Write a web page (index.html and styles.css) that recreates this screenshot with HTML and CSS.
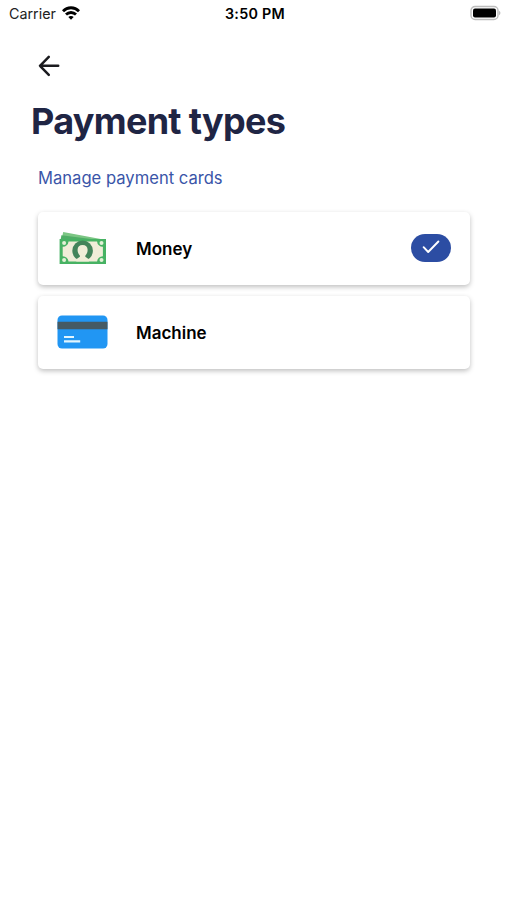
FILE: index.html
```html
<!DOCTYPE html>
<html lang="en">
<head>
  <meta charset="UTF-8" />
  <meta name="viewport" content="width=device-width, initial-scale=1.0"/>
  <title>Payment types</title>
  <link rel="stylesheet" href="styles.css">
</head>
<body>
  <header class="status-bar">
    <div class="carrier">
      <span>Carrier</span>
      <svg class="wifi" viewBox="0 0 18 14" fill="none" stroke="#000" stroke-width="2.8">
        <path d="M1 5.2C5.4 .6 12.6 .6 17 5.2" />
        <path d="M4 8.6c2.8-2.8 7.2-2.8 10 0" />
        <path d="M9 13.8 6.3 11c1.5-1.4 3.9-1.4 5.4 0z" fill="#000" stroke="none" />
      </svg>
    </div>
    <span class="time">3:50 PM</span>
    <svg class="battery" viewBox="0 0 31 16">
      <rect x="1" y="1.5" width="27" height="13" rx="4" fill="#fff" stroke="#bdbdbd" stroke-width="1.4" />
      <rect x="3" y="3.5" width="23" height="9" rx="2" fill="#000" />
      <path d="M29.2 5.8c1.6.7 1.6 3.7 0 4.4z" fill="#b0b0b0" />
    </svg>
  </header>

  <main>
    <button type="button" class="back" aria-label="Back">
      <svg viewBox="0 0 22 22" fill="none" stroke="#1b1b1f" stroke-width="2.5" stroke-linecap="round" stroke-linejoin="round">
        <path d="M20.2 10.8H2M10.8 1.8 2 10.8l8.8 9" />
      </svg>
    </button>
    <h1>Payment types</h1>
    <a class="manage">Manage payment cards</a>

    <div class="card">
      <svg class="icon money" viewBox="0 0 48 34">
        <path d="M4.2 1 47 9H2.5z" fill="#7cc684" />
        <path d="M2.4 4.2 40 9H1.6z" fill="#4fae66" />
        <path d="M.6 8h46.4v25H.6z" fill="#47b263" />
        <path d="M9.5 10.4h28.6a5.6 5.6 0 0 0 5.8 5.4v9.4a5.6 5.6 0 0 0-5.8 5.4H9.5a5.6 5.6 0 0 0-5.8-5.4v-9.4a5.6 5.6 0 0 0 5.8-5.4z" fill="#f0edd8" />
        <g fill="#e3f1d6">
          <circle cx="5.1" cy="12.1" r="2" />
          <circle cx="42.5" cy="12.1" r="2" />
          <circle cx="5.1" cy="28.9" r="2" />
          <circle cx="42.5" cy="28.9" r="2" />
        </g>
        <circle cx="23.6" cy="19.8" r="10.3" fill="#43845a" />
        <path d="M23.6 14c3.2 0 5.2 2.1 5 5.3-.1 2.3-1 4.2-2.3 5.3v1.2l3.6 2.4v2.2H17.3v-2.2l3.6-2.4v-1.2c-1.3-1.1-2.2-3-2.3-5.3-.2-3.2 1.8-5.3 5-5.3z" fill="#f0edd8" />
      </svg>
      <span class="label">Money</span>
      <span class="badge">
        <svg viewBox="0 0 18 14" fill="none" stroke="#fff" stroke-width="1.9" stroke-linecap="round" stroke-linejoin="round">
          <path d="M1.6 7.2 6.2 12 16.4 1.5" />
        </svg>
      </span>
    </div>

    <div class="card">
      <svg class="icon bank-card" viewBox="0 0 50 34">
        <rect x="0" y="0.5" width="50" height="33" rx="4.5" fill="#2196f3" />
        <path d="M0 6.7h50v7.6H0z" fill="#455a64" />
        <path d="M6.5 21h10v2h-10zM6.5 25.2h16.2v2.2H6.5z" fill="#e1f5fe" />
      </svg>
      <span class="label">Machine</span>
    </div>
  </main>
</body>
</html>
```

FILE: styles.css
```css
* {
  margin: 0;
  padding: 0;
  box-sizing: border-box;
  font-family: Inter, 'Liberation Sans', sans-serif;
}
body {
  background: #fff;
  min-height: 100vh;
  color: #000;
}
.status-bar {
  display: grid;
  grid-template-columns: 1fr auto 1fr;
  align-items: center;
  height: 28px;
  padding: 0 6px 2px 9px;
  font-size: 14.3px;
}
.carrier {
  display: flex;
  align-items: center;
  gap: 6px;
  color: #222;
}
.wifi {
  width: 18px;
  height: 14px;
}
.time {
  font-weight: 600;
  letter-spacing: 0.3px;
}
.battery {
  width: 31px;
  height: 16px;
  justify-self: end;
}
main {
  padding: 27px 37px 0 38px;
}
.back {
  display: block;
  width: 22px;
  height: 22px;
  border: none;
  background: none;
  cursor: pointer;
}
.back svg {
  display: block;
}
h1 {
  margin: 22px 0 0 -7px;
  font-size: 36px;
  line-height: 44px;
  font-weight: 700;
  letter-spacing: -0.7px;
  color: #1f2544;
}
.manage {
  display: block;
  margin: 25px 0 23px;
  font-size: 16.6px;
  line-height: 21px;
  color: #3a55a8;
}
.card {
  display: flex;
  align-items: center;
  height: 73px;
  margin-bottom: 11px;
  padding: 0 19px 0 19px;
  border-radius: 5px;
  background: #fff;
  box-shadow: 0 2px 5px rgba(0, 0, 0, 0.25);
}
.icon {
  flex: none;
}
.money {
  width: 48px;
  height: 34px;
  margin: 0 29px 0 2px;
}
.bank-card {
  width: 51px;
  height: 34px;
  margin-right: 28px;
}
.label {
  flex: 1;
  font-size: 17px;
  font-weight: 600;
}
.badge {
  display: flex;
  align-items: center;
  justify-content: center;
  width: 40px;
  height: 28px;
  margin-bottom: 1px;
  border-radius: 14px;
  background: #2c4da3;
}
.badge svg {
  width: 18px;
  height: 14px;
  margin-top: -3px;
}
.money,
.bank-card {
  margin-bottom: 1px;
}
```
